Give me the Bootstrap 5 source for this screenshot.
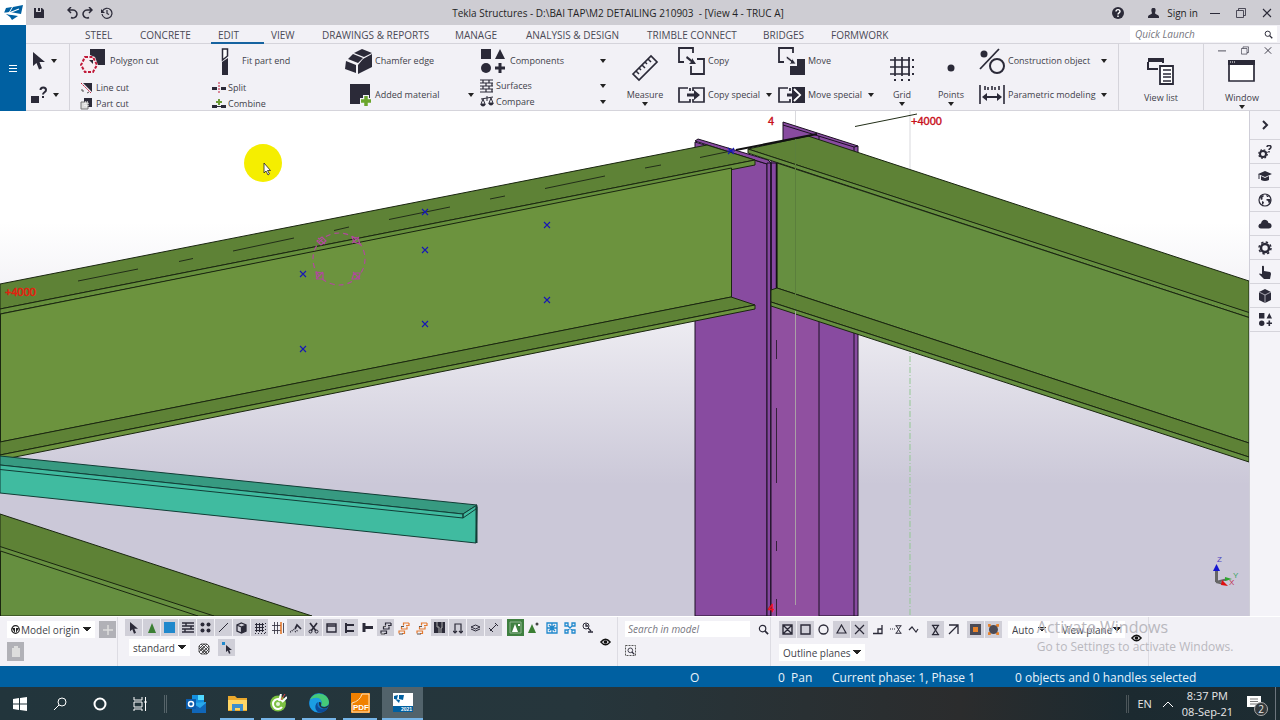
<!DOCTYPE html>
<html lang="en">
<head>
<meta charset="utf-8">
<meta name="viewport" content="width=device-width, initial-scale=1">
<title>Tekla Structures</title>
<link href="https://cdn.jsdelivr.net/npm/bootstrap@5.3.0/dist/css/bootstrap.min.css" rel="stylesheet">
<style>
:root{--ink:#2b2a38;--panel:#f2f1f6;--rule:#d5d4db;--blue:#0060a1}
body{font-family:"Open Sans","Noto Sans",sans-serif;font-size:9px;line-height:14px;color:#3f3f4a;background:var(--panel);overflow:hidden}
button,input,select{font:inherit;color:inherit}
button{border:0;background:none;padding:0;display:flex;align-items:center}
svg{display:block;flex:none;color:var(--ink)}
.titlebar{height:25px;background:#cecdd3;color:#1f1f24;font-size:10px}
.titlebar .undo{margin-left:23px}
.logo{width:26px;height:25px;background:#fff}
.doc-title{padding-right:44px;white-space:nowrap}
.strip{width:26px;flex:none;background:var(--blue)}
.strip svg{color:#fff}
.shell{min-width:0}
.tabs{display:grid;height:19px;border-bottom:1px solid var(--rule);grid-template-columns:52fr 55fr 78fr 53fr 51fr 133fr 71fr 121fr 116fr 68fr 306fr 150fr;padding-top:1px;font-size:10px}
.tabs>*{min-width:0}
.tabs a{color:#4a4a55;text-decoration:none;line-height:18px;height:18px;padding-left:7px;white-space:nowrap}
.tabs a.active{border-bottom:2px solid #1663a0}
.launch{background:#fff;height:16px;margin-right:3px}
.launch input,.find input{border:0;background:#fff;font-style:italic;font-size:10px;min-width:0;padding:0 5px;outline:0}
.launch input::placeholder,.find input::placeholder{color:#77777f;opacity:1}
.ribbon{display:grid;height:67px;grid-template-columns:54fr 132fr 133fr 135fr 132fr 66fr 100fr 102fr 44fr 54fr 140fr 85fr 77fr;border-bottom:1px solid var(--rule);white-space:nowrap;position:relative}
.ribbon>div{display:flex;flex-direction:column;min-width:0;padding-right:6px}
.ribbon .pick{border-right:1px solid var(--rule);margin-right:10px;padding:0 0 0 4px}
.big{height:34px;gap:3px;width:100%}
.big>svg:first-child{width:27px}
.pick .big>svg:first-child{width:14px;margin-left:2px}
.pick .big.ask>svg:first-child{width:18px;margin-left:0}
.sml{height:16px;gap:2px;width:100%}
.sml>svg:first-child{width:14px}
.low .big+.sml{margin-top:2px}
.tri{width:6px;height:4px;margin-left:auto}
.pick .tri{margin:0 0 0 2px}
.tall{flex-direction:column;height:66px;width:100%;padding-top:10px}
.tall .pic{height:28px}
.tall span{margin-top:6px}
.tall .tri{margin:0 auto}
.sect{border-left:1px solid var(--rule)}
.sect .pic{margin-top:3px}
.ribbon>.tight{padding-right:0}
.ribbon>.wide{padding-right:11px}
.mdi{position:absolute;right:8px;top:2px;gap:15px}
.side{width:31px;border-left:1px solid #cfced8;background:#f4f3f8}
.side button{height:24px;width:100%;border-bottom:1px solid var(--rule);justify-content:center}
.side button:first-child{height:29px}
.stage{min-height:300px;min-width:0;position:relative}
.stage>svg{position:absolute;width:100%;height:100%;inset:0}
.docks{display:grid;grid-template-columns:118fr 500fr 153fr 378fr 131fr;height:50px;position:relative;border-top:1px solid #fff;font-size:10px}
.docks>section{border-right:1px solid #dddce3;padding:2px 0 0 7px;min-width:0}
.docks>.snaps{padding-left:8px}
.line{padding-top:2px}
.tools{display:flex;gap:1px;height:18px}
.tools button,.sq{width:17px;height:17px;justify-content:center}
.tools .on,.sq{background:#d0cfd8}
.tools .comp{background:#3f8040}
.tools .gap{width:3px}
.sq.off{background:#b1b1b7}
.sq.bin{height:19px}
.warm{color:#e47a30}
.pickbox{background:#fff;border:0;appearance:none;height:17px;padding:0 4px;background-image:linear-gradient(to bottom left,#222 50%,transparent 50%),linear-gradient(to bottom right,#222 50%,transparent 50%);background-size:4px 5px,4px 5px;background-repeat:no-repeat;background-position:right 8px center,right 4px center}
.origin{position:relative}
.origin svg{position:absolute;left:4px;top:4px}
.origin select{width:88px;padding-left:14px}
.filter{width:61px}
.filters{padding:2px 0 0 4px}
.auto{width:43px;margin:0 8px 0 6px}
.plane{width:69px}
.outline{width:86px;margin-top:2px}
.see{margin:13px 6px 0}
.find input{width:125px;height:16px;padding:0 3px}
.watermark{position:absolute;left:81%;top:0;color:#b9b8be;pointer-events:none;font-size:12px;line-height:20px;white-space:nowrap}
.watermark b{display:block;font-weight:400;font-size:16px}
.status{height:21px;background:var(--blue);color:#e8f3fb;font-size:12px;line-height:24px;display:grid;grid-template-columns:690fr 88fr 13fr 41fr 183fr 265fr;white-space:nowrap}
.status span{min-width:0}
.task{height:33px;background:linear-gradient(90deg,#22353c,#26363c 45%,#2b2c2d 75%,#1c2a30 88%,#1d2c32);color:#e8e8e8;font-size:11px}
.task button{width:40px;height:33px;justify-content:center;position:relative}
.task svg{color:#fff}
.task .app{width:41px}
.task .run{border-bottom:2px solid #76b5e8;margin:0 3px 0 4px;width:34px}
.task .cur{background:#52636b;border-bottom:2px solid #76b5e8;margin-left:2px}
.task .up{width:12px;margin:0 8px 0 10px}
.task .note{width:34px;margin:0 4px 0 4px}
.edge-bar{height:33px}
.clock{line-height:16px}
.count{position:absolute;left:17px;top:15px;width:14px;height:14px;border-radius:7px;border:1px solid #aaa;background:#343a3d;font-size:10px;line-height:12px}
</style>
</head>
<body class="d-flex flex-column min-vh-100">
<svg width="0" height="0" class="position-absolute" aria-hidden="true"><defs>
<symbol id="tri" viewBox="0 0 6 4"><path d="M0 0h6L3 4z" fill="#222"/></symbol>
<symbol id="arrow" viewBox="0 0 12 18"><path d="M0 0v14l3.500-3 2.500 6.500 3-1.200L6.500 10H12z" fill="currentColor"/></symbol>
<symbol id="lens" viewBox="0 0 12 12"><circle cx="5" cy="5" r="3.500" fill="none" stroke="currentColor" stroke-width="1.300"/><path d="M7.500 7.500 11 11" stroke="currentColor" stroke-width="1.800"/></symbol>
<symbol id="eye" viewBox="0 0 12 8"><path d="M1 4Q6-2 11 4 6 10 1 4z" fill="none" stroke="#111" stroke-width="1.500"/><circle cx="6" cy="4" r="2" fill="#111"/></symbol>
<symbol id="shapes" viewBox="0 0 24 24"><path d="M0 0h10v10H0zM14 10 19 0l5 10zM17.500 14h3v3.500H24v3h-3.500V24h-3v-3.500H14v-3h3.500z" fill="currentColor"/><circle cx="5" cy="19" r="5" fill="currentColor"/></symbol>
<symbol id="restore" viewBox="0 0 10 10"><path d="M.5 2.500h7v7h-7zM2.500 2.500v-2h7v7h-2" fill="none" stroke="currentColor" stroke-width=".8"/></symbol>
<symbol id="close" viewBox="0 0 10 10"><path d="m1 1 8 8M9 1 1 9" stroke="currentColor" stroke-width="1.100"/></symbol>
<symbol id="min" viewBox="0 0 10 10"><path d="M0 5.500h10" stroke="currentColor"/></symbol>
<symbol id="stairs" viewBox="0 0 14 14"><path d="M6.500 4.500V2H12M4.500 5.500V8H10V5.500M2 12.500V10h5.500v2.500H5M12 2v2.500H9" fill="none" stroke="currentColor" stroke-width="1.200"/><path d="M2 13h4M4 5.500h3" stroke="#555"/></symbol>
<symbol id="hour" viewBox="0 0 12 12"><path d="M2 1h8M2 11h8M3 1l6 10M9 1 3 11" fill="none" stroke="currentColor" stroke-width="1.300"/></symbol>
<symbol id="cross" viewBox="0 0 8 8"><path d="m1 1 6 6M7 1 1 7" stroke="#1616b8" stroke-width="1.100"/></symbol>
</defs></svg>

<header>
<div class="titlebar d-flex align-items-center position-relative">
<div class="logo d-flex align-items-center justify-content-center"><svg width="19" height="16" viewBox="0 0 19 16"><path d="M0 8 2 3l6-1-3 5zM9 2l10-2-2 9-11-2zM2 9l12 2-6 4-2-3z" fill="#0060a1"/><path d="m0 8 6 1 11 1M5 8l10-4" stroke="#fff" stroke-width="1.200" fill="none"/></svg></div>
<button class="ms-2" aria-label="Save"><svg width="10" height="10" viewBox="0 0 10 10"><path d="M0 0h2v4h5V0h1l2 2v8H0zM4 0h2v3H4z" fill="currentColor"/></svg></button>
<button aria-label="Undo" class="undo"><svg width="11" height="12" viewBox="0 0 11 12"><path d="M2 3h4a4 4 0 1 1-2 7.500M4 0 1 3l3 3" fill="none" stroke="currentColor" stroke-width="1.500"/></svg></button>
<button aria-label="Redo" class="ms-1"><svg width="11" height="12" viewBox="0 0 11 12"><path d="M9 3H5a4 4 0 1 0 2 7.500M7 0l3 3-3 3" fill="none" stroke="currentColor" stroke-width="1.500"/></svg></button>
<button aria-label="History" class="ms-2"><svg width="12" height="12" viewBox="0 0 12 12"><path d="M1.500 4A5 5 0 1 1 1 7M6 3v3.500l2 1" fill="none" stroke="currentColor" stroke-width="1.200"/><path d="M0 2v4h4z" fill="currentColor"/></svg></button>
<div class="doc-title position-absolute start-50 translate-middle-x">Tekla Structures - D:\BAI TAP\M2 DETAILING 210903&nbsp; - [View 4 - TRUC A]</div>
<div class="ms-auto d-flex align-items-center pe-2">
<button aria-label="Help"><svg width="12" height="12" viewBox="0 0 12 12"><circle cx="6" cy="6" r="6" fill="currentColor"/><path d="M4 4.500c0-2.500 4-2.500 4 0C8 6 6 5.800 6 7.500M6 8.500V10" fill="none" stroke="#fff" stroke-width="1.400"/></svg></button>
<button class="ms-4"><svg width="11" height="10" viewBox="0 0 11 10" class="me-2"><path d="M5.500 0C8 0 8 2 7 5c0 2 4 1 4 4v1H0V9c0-3 4-2 4-4C3 2 3 0 5.500 0z" fill="currentColor"/></svg>Sign in</button>
<button class="ms-2 ps-1" aria-label="Minimise"><svg width="10" height="10"><use href="#min"/></svg></button>
<button class="ms-3" aria-label="Restore"><svg width="10" height="10"><use href="#restore"/></svg></button>
<button class="ms-3" aria-label="Close"><svg width="10" height="10"><use href="#close"/></svg></button>
</div></div>
<div class="d-flex">
<button class="strip justify-content-center align-self-stretch" aria-label="Menu"><svg width="8" height="9"><path d="M0 1.500h8M0 4.500h8M0 7.500h8" stroke="currentColor"/></svg></button>
<div class="flex-fill shell">
<nav class="tabs"><i></i><a href="#">STEEL</a><a href="#">CONCRETE</a><a href="#" class="active">EDIT</a><a href="#">VIEW</a><a href="#">DRAWINGS &amp; REPORTS</a><a href="#">MANAGE</a><a href="#">ANALYSIS &amp; DESIGN</a><a href="#">TRIMBLE CONNECT</a><a href="#">BRIDGES</a><a href="#">FORMWORK</a>
<div class="launch d-flex align-items-center"><input class="flex-fill" placeholder="Quick Launch" aria-label="Quick Launch"><svg width="9" height="9" class="me-1"><use href="#lens"/></svg></div></nav>
<div class="ribbon">
<div class="pick"><button class="big" aria-label="Select"><svg height="18"><use href="#arrow"/></svg><svg class="tri"><use href="#tri"/></svg></button>
<button class="big ask" aria-label="Inquire"><svg height="18" viewBox="0 0 18 18"><path d="M1 10h8v7H1z" fill="currentColor"/><path d="M10.500 4c0-3.500 5.500-3.500 5.500 0 0 2.500-3 2-3 4.500M13 10v2" fill="none" stroke="currentColor" stroke-width="2"/></svg><svg class="tri"><use href="#tri"/></svg></button></div>
<div class="low"><button class="big"><svg height="26" viewBox="0 0 27 26"><path d="M10 1h15v16h-7l-3-8-5-2z" fill="currentColor"/><path d="m5 9h8l4 8-4 7H5l-4-7z" fill="#f8eef2" stroke="#c01838" stroke-width="2" stroke-dasharray="3 1.500"/><path d="m9 12h4v4z" fill="currentColor"/></svg>Polygon cut</button>
<button class="sml"><svg height="12" viewBox="0 0 14 12"><path d="M3 1h9v9z" fill="currentColor"/><path d="m1 1 10 10" stroke="#c01838" stroke-dasharray="2 1"/><path d="M2 7v2h2M7 11l2-1" stroke="#555" fill="none"/></svg>Line cut</button>
<button class="sml"><svg height="12" viewBox="0 0 14 12"><path d="M4 0h8v9H4z" fill="currentColor"/><path d="M1 4h7v7H1z" fill="#ddd" stroke="#777"/><path d="M5 4h3v4H5z" fill="none" stroke="#fff" stroke-dasharray="1 1"/></svg>Part cut</button></div>
<div class="low"><button class="big"><svg height="28" viewBox="0 0 27 28"><path d="M10.500 2h5v7l-5 4z" fill="#fff" stroke="currentColor" stroke-width="1.500"/><path d="m10 15 6-4v17h-6z" fill="currentColor"/></svg>Fit part end</button>
<button class="sml"><svg height="12" viewBox="0 0 14 12"><path d="M0 5h5v3H0zM9 5h5v3H9z" fill="currentColor"/><path d="M7 0v12" stroke="#c01838" stroke-dasharray="2 1"/></svg>Split</button>
<button class="sml"><svg height="12" viewBox="0 0 14 12"><path d="M0 7h5v3H0zM9 7h5v3H9zM5 8h4v1H5z" fill="currentColor"/><path d="M7 1v6M4 4h6" stroke="#6c9a34" stroke-width="2"/></svg>Combine</button></div>
<div><button class="big"><svg height="26" viewBox="0 0 27 26"><path d="m9 5 8-4 10 4-8 4zM8 6l10 4-5 5-10-4zM1 13l10 4v8L0 21zM13 17l5-6 9-5v13l-14 7z" fill="currentColor"/></svg>Chamfer edge</button>
<button class="big"><svg height="24" viewBox="0 0 27 24"><path d="M5 1h20v20H5z" fill="currentColor"/><path d="M21 12v12M15 18h12" stroke="#f2f1f6" stroke-width="6"/><path d="M21 13v10M16 18h10" stroke="#6ba52c" stroke-width="3.500"/></svg>Added material<svg class="tri"><use href="#tri"/></svg></button></div>
<div><button class="big"><svg height="24"><use href="#shapes" width="24" height="24" x="1"/></svg>Components<svg class="tri"><use href="#tri"/></svg></button>
<button class="sml"><svg height="14" viewBox="0 0 14 14"><path d="M0 1h13M0 4h13M0 7h13M0 10h13M0 13h13M3 1v3M9 1v3M6 4v3M12 4v3M3 7v3M9 7v3M6 10v3M12 10v3" stroke="currentColor" stroke-width="1.200"/></svg>Surfaces<svg class="tri"><use href="#tri"/></svg></button>
<button class="sml"><svg height="12" viewBox="0 0 14 12"><path d="M1 3l12-2M7 0v5M3 3 1 8h4zM11 2 9 7h4z" fill="none" stroke="currentColor"/><path d="M0 8h6q-3 5-6 0M8 7h6q-3 5-6 0" fill="currentColor"/></svg>Compare<svg class="tri"><use href="#tri"/></svg></button></div>
<div class="tight"><button class="tall"><svg class="pic" width="28" viewBox="0 0 28 28"><path d="m2 20 18-18 6 6L8 26z" fill="none" stroke="currentColor" stroke-width="1.700"/><path d="m5 17 3 3M8 14l2 2M11 11l3 3M14 8l2 2M17 5l3 3" stroke="currentColor" stroke-width="1.500"/></svg><span>Measure</span><svg class="tri"><use href="#tri"/></svg></button></div>
<div><button class="big"><svg height="28" viewBox="0 0 27 28"><path d="M6 15H1V1h14v5M19 12h7v15H13v-8" fill="none" stroke="currentColor" stroke-width="1.800"/><path d="m9 9 5 4V11l4 6-7 0 2-2-5-4z" fill="currentColor"/></svg>Copy</button>
<button class="big"><svg height="16" viewBox="0 0 27 16"><path d="M10 1H1v14h11v-3M12 1v3M15 4V1h11v14H15v-3" fill="none" stroke="currentColor" stroke-width="1.700"/><path d="M9 6.500h7V3l6 5-6 5V9.500H9z" fill="currentColor"/></svg>Copy special<svg class="tri"><use href="#tri"/></svg></button></div>
<div><button class="big"><svg height="28" viewBox="0 0 27 28"><path d="M6 15H1V1h14v5" fill="none" stroke="currentColor" stroke-width="1.800"/><path d="M19 12h8v16H12V19h7z" fill="currentColor"/><path d="m9 9 5 4V11l4 6-7 0 2-2-5-4z" fill="currentColor" stroke="#f2f1f6" stroke-width=".8"/></svg>Move</button>
<button class="big"><svg height="16" viewBox="0 0 27 16"><path d="M10 1H1v14h11v-3M12 1v3" fill="none" stroke="currentColor" stroke-width="1.700"/><path d="M14 0h13v16H14z" fill="currentColor"/><path d="m16 2 6 6-6 6" fill="none" stroke="#fff" stroke-width="2"/><path d="M9 6.500h6V3l6 5-6 5V9.500H9z" fill="currentColor"/></svg>Move special<svg class="tri"><use href="#tri"/></svg></button></div>
<div class="tight"><button class="tall"><svg class="pic" width="26" viewBox="0 0 26 28"><path d="M6 3v19M13 3v19M20 3v19M1 6h20M1 13h20M1 20h20" stroke="currentColor" stroke-width="1.700"/><path d="M24 5v18M5 26h18" stroke="currentColor" stroke-width="2" stroke-dasharray="2 5"/></svg><span>Grid</span><svg class="tri"><use href="#tri"/></svg></button></div>
<div class="tight"><button class="tall"><svg class="pic" width="8" viewBox="0 0 8 28"><circle cx="4" cy="14" r="3.500" fill="currentColor"/></svg><span>Points</span><svg class="tri"><use href="#tri"/></svg></button></div>
<div class="wide"><button class="big"><svg height="26" viewBox="0 0 27 26"><path d="M2 21 21 1" stroke="currentColor" stroke-width="1.800"/><circle cx="6" cy="6" r="3.500" fill="currentColor"/><circle cx="19" cy="18" r="7" fill="none" stroke="currentColor" stroke-width="2"/></svg>Construction object<svg class="tri"><use href="#tri"/></svg></button>
<button class="big"><svg height="20" viewBox="0 0 27 20"><path d="M2 0v19M26 0v19M7 1v4M10 2v3M14 1v4M17 2v3M21 1v4" stroke="currentColor" stroke-width="1.600"/><path d="m4 12 5-4v3h10V8l5 4-5 4v-3H9v3z" fill="currentColor"/></svg>Parametric modeling<svg class="tri"><use href="#tri"/></svg></button></div>
<div class="sect tight"><button class="tall"><svg class="pic" width="28" viewBox="0 0 28 28"><path d="M1 2h15v4M1 5v7h10" fill="none" stroke="currentColor" stroke-width="2"/><path d="M1 1h15v4H1z" fill="currentColor"/><path d="M13 9h13v18H13z" fill="#fff" stroke="currentColor" stroke-width="1.800"/><path d="M16 13h8M16 17h8M16 20h8M16 24h8" stroke="currentColor" stroke-width="1.500"/></svg><span>View list</span></button></div>
<div class="sect tight"><button class="tall"><svg class="pic" width="28" viewBox="0 0 28 28"><path d="M1 4h25v20H1z" fill="#fff" stroke="currentColor" stroke-width="1.700"/><path d="M0 3h27v5H0z" fill="currentColor"/><path d="M2 5h6" stroke="#fff" stroke-dasharray="1 1"/></svg><span>Window</span><svg class="tri"><use href="#tri"/></svg></button></div>
<nav class="mdi d-flex flex-row"><svg width="8" height="9"><use href="#min"/></svg><svg width="8" height="9"><use href="#restore"/></svg><svg width="8" height="9"><use href="#close"/></svg></nav>
</div></div></div>
</header>

<main class="d-flex flex-fill">
<div class="stage flex-fill">
<svg viewBox="0 111 1249 505" preserveAspectRatio="xMidYMid slice" font-family="Liberation Sans, sans-serif" font-size="11">
<defs><linearGradient id="sky" x1="0" y1="0" x2="0" y2="1"><stop offset=".22" stop-color="#fff"/><stop offset=".36" stop-color="#f3f2f6"/><stop offset=".74" stop-color="#cbc8d8"/></linearGradient></defs>
<path fill="url(#sky)" d="M0 111h1249v505H0z"/>
<path d="M795.500 111v30M910 111v74" stroke="#d9d9dd"/>
<path d="M910 345v271" stroke="#93c793" stroke-dasharray="6 2 1 2"/>
<g stroke="#1b1022" stroke-linejoin="round">
<path d="m783 122 75 24v470h-87V160l12-10z" fill="#884ba0"/>
<path d="m783 125 71 22 4-1M854 147v10M819 136v7" fill="none"/>
<path d="m695 142 72 22v452h-72z" fill="#884ba0"/><path d="m695 141 3-2 70 21 3 3-4 1z" fill="#884ba0"/>
<path d="M767 163h4v453h-4zM771 163h6v453h-6z" fill="#8548a0"/>
<path d="M771 300h48v316h-48z" fill="#9050a0" stroke="none"/>
<path d="M771 163v453M819 310v306M854 320v296" fill="none"/>
</g>
<g stroke="#1a2610" stroke-linejoin="round">
<path d="m748 149 60-13 441 145v32z" fill="#5e8236"/><path d="m748 149 501 163.500v5L748 153z" fill="#668f40"/>
<path d="m777 163 472 154.500V443L777 288z" fill="#668f40"/>
<path d="m771 290 6-2 472 155v14L771 302z" fill="#5e8236"/><path d="m771 302 478 155v5L771 306z" fill="#668f40"/>
<path d="M0 284 707 145l48 15L0 309z" fill="#5e8236"/><path d="m0 309 755-149v5L0 314z" fill="#668f3c"/>
<path d="m.5 314 731-146v129L.5 442z" fill="#6c933e"/>
<path d="m0 442 731-145 24 8L0 455z" fill="#5e8236"/><path d="m0 455 755-150v4L0 460z" fill="#6c933e"/>
<path d="m0 514 312 102H0z" fill="#5e8236"/><path d="M0 546.500 214 616H0z" fill="#668f40"/><path d="M.5 551 198 616H.5z" fill="#668f40"/>
</g>
<path d="M776.500 163v125" stroke="#111" stroke-width="1.500"/>
<path d="m736 150 81-16" stroke="#111" stroke-width="2"/>
<g stroke="#123d36" stroke-linejoin="round"><path d="m0 465 463 52 14-10-1 36L0 493z" fill="#40bba0"/><path d="m0 456 477 49-14 9L0 465z" fill="#379a81"/><path d="m0 465 463 49v4L0 469.500zM463 514l14-9-1 4-13 9z" fill="#40bba0"/><path d="M476.500 506v37" stroke-width="2"/></g>
<path d="M795.500 139v170" stroke="#5b7f3c"/><path d="M795.500 311v294" stroke="#aaa0a6"/>
<path d="m78 281 60-12m41-7.500 14-3M233 251l61-13m40-7.500 15-3.500m40-7.500 61-12.500m40-8 15-3m40-7.500 60-12.500m40-8 16-3m39-7.500 31-6.500M855 126.500l62-12.500" fill="none" stroke="#222e18"/>
<path d="M776.500 340v19m0 49v75m0 58v10m0 48v17" stroke="#33203a"/>
<g><use href="#cross" x="421" y="208" width="8" height="8"/><use href="#cross" x="421" y="246" width="8" height="8"/><use href="#cross" x="421" y="320" width="8" height="8"/><use href="#cross" x="543" y="221" width="8" height="8"/><use href="#cross" x="543" y="296" width="8" height="8"/><use href="#cross" x="299" y="270" width="8" height="8"/><use href="#cross" x="299" y="345" width="8" height="8"/><use href="#cross" x="727" y="147" width="8" height="8"/><path d="M727 151h8" stroke="#1616b8"/></g>
<g fill="none" stroke="#b04a9c" stroke-width="1.200"><circle cx="339" cy="259" r="26" stroke-dasharray="5 4"/><path d="m317 241 5-4 4 4-5 4zM318 238l7 6M352 237l6 1 2 6-6-2zM352 243l7-6M316 272l7 1v6h-6zM316 279l7-7M354 273h6l-1 6h-7zM353 272l7 7"/></g>
<g fill="#c8101c"><text x="768" y="125" stroke="#c8101c" stroke-width=".4">4</text><text x="911" y="125" stroke="#c8101c" stroke-width=".4">+4000</text><text x="5" y="296" fill="#e3200f" stroke="#e3200f" stroke-width=".5">+4000</text><text x="768" y="612" fill="#f01020" stroke="#f01020" stroke-width=".5">4</text></g>
<circle cx="263" cy="163" r="19" fill="#f5ee00"/><path d="M264 163v10l2-2 2 4 1.500-1-2-3.500h3z" fill="#fff" stroke="#222" stroke-width=".8"/>
<path d="M1216.500 582v-12" stroke="#666" stroke-width="3"/><path d="m1216 582 12-3m-12 3 8 2" stroke="#666" stroke-width="2"/><path d="m1213 571 3.500-7 3.500 7z" fill="#1515d0"/><path d="m1225 577 7 2-7 2z" fill="#2fa52f"/><path d="m1222 580 6 6-7-1z" fill="#e01010"/>
<g font-size="8"><text x="1217" y="562" fill="#4b3fc0">Z</text><text x="1233" y="578" fill="#3aa565">Y</text><text x="1229" y="585" fill="#c03050">X</text></g>
</svg></div>
<aside class="side">
<button aria-label="Expand"><svg width="8" height="10"><path d="m2 1 4 4-4 4" fill="none" stroke="currentColor" stroke-width="2"/></svg></button>
<button aria-label="Properties"><svg width="14" height="14" viewBox="0 0 14 14"><circle cx="5" cy="9" r="3" fill="none" stroke="currentColor" stroke-width="2"/><circle cx="5" cy="9" r="4.300" fill="none" stroke="currentColor" stroke-width="1.200" stroke-dasharray="1.700 1.700"/><path d="M9 2c0-2 4-2 4 0 0 2-2 1.500-2 3M11 6v1.500" fill="none" stroke="currentColor" stroke-width="1.500"/></svg></button>
<button aria-label="Learning"><svg width="14" height="12" viewBox="0 0 14 12"><path d="m0 4 7-3 7 3-7 3zM3 6l4 2 4-2v4q-4 2-8 0z" fill="currentColor"/><path d="M1 4v5" stroke="currentColor"/></svg></button>
<button aria-label="Web"><svg width="14" height="14" viewBox="0 0 14 14"><circle cx="7" cy="7" r="6" fill="none" stroke="currentColor" stroke-width="1.200"/><path d="M2 4l3-2 1 1-2 2 1 1-2 1zM4 8l2 1-1 3-1-1zM8 2l3 1-1 1H9zM9 6h3l1 1-2 4-1-3-2-1z" fill="currentColor"/></svg></button>
<button aria-label="Cloud"><svg width="14" height="10" viewBox="0 0 14 10"><path d="M3 9.500Q0 9 .5 6.500 1 4.500 3 4.500 4 0 8 1q2 .5 2.500 3Q14 4 13.500 7.500 13 9.500 11 9.500z" fill="currentColor"/></svg></button>
<button aria-label="Settings"><svg width="14" height="14" viewBox="0 0 14 14"><circle cx="7" cy="7" r="4" fill="none" stroke="currentColor" stroke-width="2.500"/><circle cx="7" cy="7" r="6" fill="none" stroke="currentColor" stroke-width="1.500" stroke-dasharray="2.400 2.312"/></svg></button>
<button aria-label="Touch"><svg width="12" height="14" viewBox="0 0 12 14"><path d="M3 1q2-1 2 1v4l6 1q1 .5 1 2l-1 5H5L0 9q0-1 3 0z" fill="currentColor"/></svg></button>
<button aria-label="Model"><svg width="14" height="14" viewBox="0 0 14 14"><path d="m7 0 6 3v8l-6 3-6-3V3z" fill="currentColor"/><path d="m1 3 6 3 6-3M7 6v8" stroke="#c6c5cf" fill="none" stroke-width=".8"/></svg></button>
<button aria-label="Components"><svg width="13" height="13"><use href="#shapes"/></svg></button>
</aside></main>

<div class="docks">
<section><div class="d-flex align-items-center line gap-1"><div class="origin"><select class="pickbox" aria-label="Origin"><option>Model origin</option></select><svg width="9" height="9" viewBox="0 0 9 9"><circle cx="4.500" cy="4.500" r="3.800" fill="none" stroke="#222" stroke-width="1.200"/><path d="M1 3h3v5zM8 3H5v5z" fill="#222"/></svg></div><button class="sq off" aria-label="Add"><svg width="10" height="10"><path d="M5 0v10M0 5h10" stroke="#ddd" stroke-width="1.500"/></svg></button></div>
<button class="sq off bin mt-1" aria-label="Delete"><svg width="8" height="11"><path d="M0 2h8v9H0zM2 0h4v2H2z" fill="#ddd"/></svg></button></section>
<section><div class="d-flex"><div><div class="tools">
<button class="on" aria-label="Select all"><svg width="8" height="12"><use href="#arrow"/></svg></button>
<button class="on" aria-label="Connections"><svg width="10" height="12"><path d="m5 1 4 10H1z" fill="#3b7f33"/></svg></button>
<button class="on" aria-label="Parts"><svg width="11" height="11"><path d="M0 0h11v11H0z" fill="#2088cc"/></svg></button>
<button class="on" aria-label="Surfaces"><svg width="12" height="11" viewBox="0 0 12 11"><path d="M0 1h12M0 4h12M0 7h12M0 10h12M4 1v3M9 4v3M3 7v3" stroke="currentColor" stroke-width="1.400"/></svg></button>
<button class="on" aria-label="Points"><svg width="11" height="11"><g fill="currentColor"><circle cx="2.500" cy="2.500" r="2"/><circle cx="8.500" cy="2.500" r="2"/><circle cx="2.500" cy="8.500" r="2"/><circle cx="8.500" cy="8.500" r="2"/></g></svg></button>
<button class="on" aria-label="Lines"><svg width="11" height="11"><path d="m1 10 9-9" stroke="currentColor"/></svg></button>
<button class="on" aria-label="Objects"><svg width="11" height="12" viewBox="0 0 11 12"><path d="m5.500 1 4.500 2v6l-4.500 2L1 9V3zM1 3l4.500 2L10 3M5.500 5v6" fill="none" stroke="currentColor" stroke-width="1.300"/><path d="m5.500 5 4.500-2v6l-4.500 2z" fill="currentColor"/></svg></button>
<button class="on" aria-label="Grid"><svg width="12" height="12"><path d="M2.500 1v9M5.500 1v9M8.500 1v9M1 2.500h9M1 5.500h9M1 8.500h9" stroke="currentColor"/><path d="M11.500 1v10M1 11.500h10" stroke="currentColor" stroke-dasharray="1 2"/></svg></button>
<button aria-label="Grid line"><svg width="12" height="12"><path d="M2.500 0v12M5.500 0v12M0 3.500h9M0 8.500h9M11.500 1v10" stroke="currentColor" stroke-width=".8"/><path d="M9 0v12" stroke="#e07020" stroke-width="1.500"/></svg></button>
<button class="on" aria-label="Welds"><svg width="12" height="12"><path d="m5 7 2-4 4 4" fill="none" stroke="currentColor" stroke-width="1.700"/><path d="m0 10 5-3M5 10l3-2" stroke="currentColor" stroke-dasharray="1 1" stroke-width="1.500"/></svg></button>
<button class="on" aria-label="Cuts"><svg width="11" height="12"><path d="m2 1 6 8M9 1 3 9" stroke="currentColor" stroke-width="1.700"/><circle cx="2.500" cy="9.500" r="1.500" fill="none" stroke="currentColor"/><circle cx="8.500" cy="9.500" r="1.500" fill="none" stroke="currentColor"/></svg></button>
<button class="on" aria-label="Views"><svg width="11" height="10"><path d="M1 1h9v8H1zM1 3h9" fill="none" stroke="currentColor" stroke-width="1.400"/></svg></button>
<button class="on" aria-label="Bolts"><svg width="11" height="12"><path d="M2 1v10M2 3h8M2 9h8" stroke="currentColor" stroke-width="2"/></svg></button>
<button aria-label="Single bolt"><svg width="12" height="10"><path d="M2 0v9M2 4.500h9" stroke="currentColor" stroke-width="3"/></svg></button>
<button class="on" aria-label="Rebar set"><svg width="14" height="14"><use href="#stairs"/></svg></button>
<button aria-label="Rebar group"><svg width="14" height="14" class="warm"><use href="#stairs"/></svg></button>
<button aria-label="Rebar"><svg width="14" height="14" class="warm"><use href="#stairs"/></svg></button>
<button class="on" aria-label="Pour"><svg width="11" height="11"><path d="M0 0h11v11H0z" fill="currentColor"/><path d="M3 0v5h2v6M8 0v6H7v5" fill="none" stroke="#aaa"/></svg></button>
<button class="on" aria-label="Loads"><svg width="10" height="12"><path d="M2 10V2h6v8M0 9l2 2 2-2M6 9l2 2 2-2" fill="none" stroke="currentColor" stroke-width="1.200"/></svg></button>
<button class="on" aria-label="Planes"><svg width="11" height="10"><path d="m1 4 4.500-2L10 4 5.500 6zM1 6l4.500 2L10 6" fill="none" stroke="currentColor"/></svg></button>
<button class="on" aria-label="Distances"><svg width="11" height="11"><path d="m2 9 7-7M1 6l4 4M7 1l3 3" stroke="currentColor"/></svg></button>
<i class="gap"></i>
<button class="comp" aria-label="Component mode"><svg width="13" height="13"><path d="M1 1h11v11H1z" fill="none" stroke="#8fb58f"/><path d="m6 3 3 8H3zM9 3h2v2H9z" fill="#fff"/></svg></button>
<button aria-label="Component objects"><svg width="11" height="13"><path d="m4 3 4 9H0z" fill="#3b7f33"/><circle cx="9" cy="3" r="1.500" fill="#444"/></svg></button>
<button aria-label="Assemblies"><svg width="12" height="12"><path d="M1 1h10v10H1zM3 3l6 6M9 3 3 9M6 1v10M1 6h10" fill="none" stroke="#2088cc" stroke-width="1.300"/></svg></button>
<button aria-label="Assembly objects"><svg width="12" height="12"><path d="M1 1h3v3H1zM8 1h3v3H8zM1 8h3v3H1zM8 8h3v3H8zM4 4l4 4M8 4 4 8" fill="none" stroke="#2088cc" stroke-width="1.300"/></svg></button>
<button aria-label="Query"><svg width="12" height="12"><circle cx="4" cy="4" r="3" fill="none" stroke="currentColor"/><path d="M4 2v2h2M6 6l3 3M6 10h5" fill="none" stroke="currentColor" stroke-width="1.300"/></svg></button>
</div><div class="d-flex gap-2 filters align-items-start"><select class="pickbox filter" aria-label="Filter"><option>standard</option></select><svg width="12" height="12" viewBox="0 0 12 12" class="mt-1"><path d="M3 1h6l2 2v6l-2 2H3L1 9V3zM1 5l6 6M3 3l6 7M1 3l8 8M3 1l8 8M6 1l5 5M1 9l8-8M3 11l8-8M1 6l5-5M6 11l5-5" fill="none" stroke="#333" stroke-width=".8"/></svg><button class="sq" aria-label="Filter selection"><svg width="11" height="13"><path d="M1 1h3v3H1z" fill="#2088cc"/><use href="#arrow" x="5" y="4" width="6" height="9"/></svg></button></div></div>
<button class="ms-1 mt-2" aria-label="Show selection tools"><svg width="11" height="8"><use href="#eye"/></svg></button></div></section>
<section class="find"><div class="d-flex align-items-center line gap-2"><input placeholder="Search in model" aria-label="Search in model"><svg width="11" height="11"><use href="#lens"/></svg></div><svg width="11" height="11" class="mt-2"><path d="M.5.500h10v10H.5z" fill="none" stroke="#555" stroke-dasharray="2 1"/><use href="#lens" x="2" y="2" width="8" height="8"/></svg></section>
<section class="snaps"><div class="d-flex align-items-start line"><div class="tools flex-fill">
<button class="on" aria-label="Snap to points"><svg width="11" height="11"><path d="M1 1h9v9H1zM1 1l9 9M10 1l-9 9" fill="none" stroke="currentColor" stroke-width="1.400"/></svg></button>
<button class="on" aria-label="End points"><svg width="11" height="11"><path d="M1 1h9v9H1z" fill="none" stroke="currentColor" stroke-width="1.400"/></svg></button>
<button aria-label="Centre"><svg width="11" height="11"><circle cx="5.500" cy="5.500" r="4.500" fill="none" stroke="currentColor" stroke-width="1.300"/></svg></button>
<button class="on" aria-label="Mid point"><svg width="11" height="11"><path d="m5.500 1 4.500 8H1z" fill="none" stroke="currentColor" stroke-width="1.200"/></svg></button>
<button class="on" aria-label="Intersection"><svg width="11" height="11"><path d="m1 1 9 9M10 1l-9 9" stroke="currentColor" stroke-width="1.200"/></svg></button>
<button aria-label="Perpendicular"><svg width="11" height="11"><path d="M1 9.500h9V1M6 9V5h4" fill="none" stroke="currentColor" stroke-width="1.300"/></svg></button>
<button aria-label="Extension"><svg width="12" height="11"><path d="M0 5h5" stroke="currentColor" stroke-dasharray="1 1"/><use href="#hour" x="4" width="9" height="11"/></svg></button>
<button aria-label="Free"><svg width="11" height="8"><path d="m1 4 3-3 4 5 2-3" fill="none" stroke="currentColor" stroke-width="1.200"/></svg></button>
<i class="gap"></i><button class="on" aria-label="Nearest"><svg width="11" height="12"><use href="#hour"/></svg></button>
<button aria-label="Snap line"><svg width="11" height="11"><path d="M1 1h9v9M10 1 1 10" fill="none" stroke="currentColor" stroke-width="1.300"/></svg></button>
<i class="gap"></i><button class="on" aria-label="Reference points"><svg width="11" height="11"><path d="M0 0h11v11H0z" fill="#4b4a55"/><path d="M3 3h5v5H3z" fill="#e8822a"/></svg></button>
<button class="on" aria-label="Geometry points"><svg width="11" height="11"><circle cx="5.500" cy="5.500" r="4.500" fill="#4b4a55"/><path d="m0 0 3 1-2 2zM11 0 8 1l2 2zM0 11l1-3 2 2zM11 11l-3-1 2-2z" fill="#e8822a" stroke="#e8822a"/></svg></button>
</div><select class="pickbox auto" aria-label="Snap depth"><option>Auto</option></select><select class="pickbox plane" aria-label="Plane"><option>View plane</option></select><svg width="11" height="8" class="see"><use href="#eye"/></svg></div><select class="pickbox outline" aria-label="Plane type"><option>Outline planes</option></select></section>
<div class="watermark"><b>Activate Windows</b>Go to Settings to activate Windows.</div>
</div>

<footer><div class="status"><i></i><span>O</span><span>0</span><span>Pan</span><span>Current phase: 1, Phase 1</span><span>0 objects and 0 handles selected</span></div>
<div class="task d-flex align-items-center">
<button aria-label="Start"><svg width="14" height="14"><path d="m0 2 6-1v5.500H0zM7 1l7-1v6.500H7zM0 7.500h6V13l-6-1zM7 7.500h7V14l-7-1z" fill="currentColor"/></svg></button>
<button aria-label="Search"><svg width="14" height="14"><circle cx="9" cy="5" r="4" fill="none" stroke="currentColor"/><path d="m6 8-5 5" stroke="currentColor"/></svg></button>
<button aria-label="Cortana"><svg width="14" height="14"><circle cx="7" cy="7" r="5.500" fill="none" stroke="currentColor" stroke-width="2"/></svg></button>
<button aria-label="Task view"><svg width="14" height="14"><path d="M1 0v3h8V0M1 5h8v5H1zM1 14v-2h8v2M12.500 0v14M11 5h3" fill="none" stroke="currentColor"/></svg></button>
<svg width="15" height="18"><path d="M4.500 0v18M6.500 0v18" stroke="#56646a"/></svg>
<button class="app" aria-label="Outlook"><svg width="20" height="18" viewBox="0 0 20 18"><path d="M6 0h12v9H6z" fill="#1490df"/><path d="M12 0h6v5h-6z" fill="#50d9ff"/><path d="m6 8 14-1v10H6z" fill="#28a8ea"/><path d="m6 8 8 5 6-5v10H6z" fill="#1066b8"/><path d="M0 4h10v10H0z" fill="#0a5cad"/><circle cx="5" cy="9" r="2.500" fill="none" stroke="#fff" stroke-width="1.500"/></svg></button>
<button class="run" aria-label="Files"><svg width="19" height="16"><path d="M0 1h7l2 2h10v13H0z" fill="#e9a82d"/><path d="M0 5h19v10H0z" fill="#ffd766"/><path d="M4 16V9h11v7h-3v-3H7v3z" fill="#3d8fce"/></svg></button>
<button class="run" aria-label="Coc Coc"><svg width="18" height="18"><circle cx="9" cy="9.500" r="8" fill="#7cc142"/><path d="M13 7a5 5 0 1 0 0 6" fill="none" stroke="#fff" stroke-width="2"/><circle cx="9" cy="10" r="2" fill="#e6f4dc"/><path d="m10 7 2-7M13 8l5-5" stroke="#fff" stroke-width="2"/><path d="m12 6 4-6" stroke="#e24545"/></svg></button>
<button class="run" aria-label="Edge"><svg width="20" height="20" viewBox="0 0 20 20"><circle cx="10" cy="10" r="10" fill="#1276c8"/><path d="M1 7C4-2 19-1 20 9c0 5-6 6-8 3 3-5-4-9-11-5z" fill="#45c978"/><path d="M1 7c6-4 12-2 11 3-5-3-7 3-3 9C3 19-1 13 1 7z" fill="#1b9de2"/><path d="M9 9c-2 4 1 9 10 6-3 5-8 5-10 4-4-3-3-8 0-10z" fill="#0c4b98"/><path d="M10 9c3 0 2 2 2 4 2 2 5 1 8-1-2 6-11 4-10-3z" fill="#22343a"/></svg></button>
<button class="run" aria-label="PDF reader"><svg width="19" height="20" font-size="8" font-family="Liberation Sans" font-weight="700"><path d="M0 0h19v20H0z" fill="#f08000"/><path d="M1 10Q9 8 11 1h7v18H1z" fill="none" stroke="#ffe3bb"/><text x="2" y="17" fill="#fff">PDF</text></svg></button>
<button class="app cur" aria-label="Tekla Structures"><svg width="20" height="19" font-size="5" font-family="Liberation Sans" font-weight="700"><path d="M0 0h20v19H0z" fill="#fff"/><path d="M1 3 5 2 4 6H1zM6 2h5l-1 5-4-1zM2 6l5 1-1 3zM0 13h20v6H0z" fill="#0060a1"/><text x="8" y="18" fill="#fff">2021</text></svg></button>
<div class="ms-auto d-flex align-items-center"><svg width="12" height="18"><path d="M1.500 0v18M3.500 0v18" stroke="#4c565a"/></svg><span>EN</span><button class="up" aria-label="Hidden icons"><svg width="12" height="8"><path d="m1 7 5-5 5 5" fill="none" stroke="currentColor"/></svg></button><div class="clock text-center">8:37 PM<br>08-Sep-21</div><button class="note" aria-label="Notifications"><svg width="14" height="15"><path d="M0 0h14v11h-3v3l-3-3H0z" fill="#fff"/><path d="M3 3h8M3 5.500h8M3 8h8" stroke="#777"/></svg><span class="count">2</span></button><i class="border-start border-secondary edge-bar me-1"></i></div>
</div></footer>
<script src="https://cdn.jsdelivr.net/npm/bootstrap@5.3.0/dist/js/bootstrap.bundle.min.js"></script>
</body>
</html>
